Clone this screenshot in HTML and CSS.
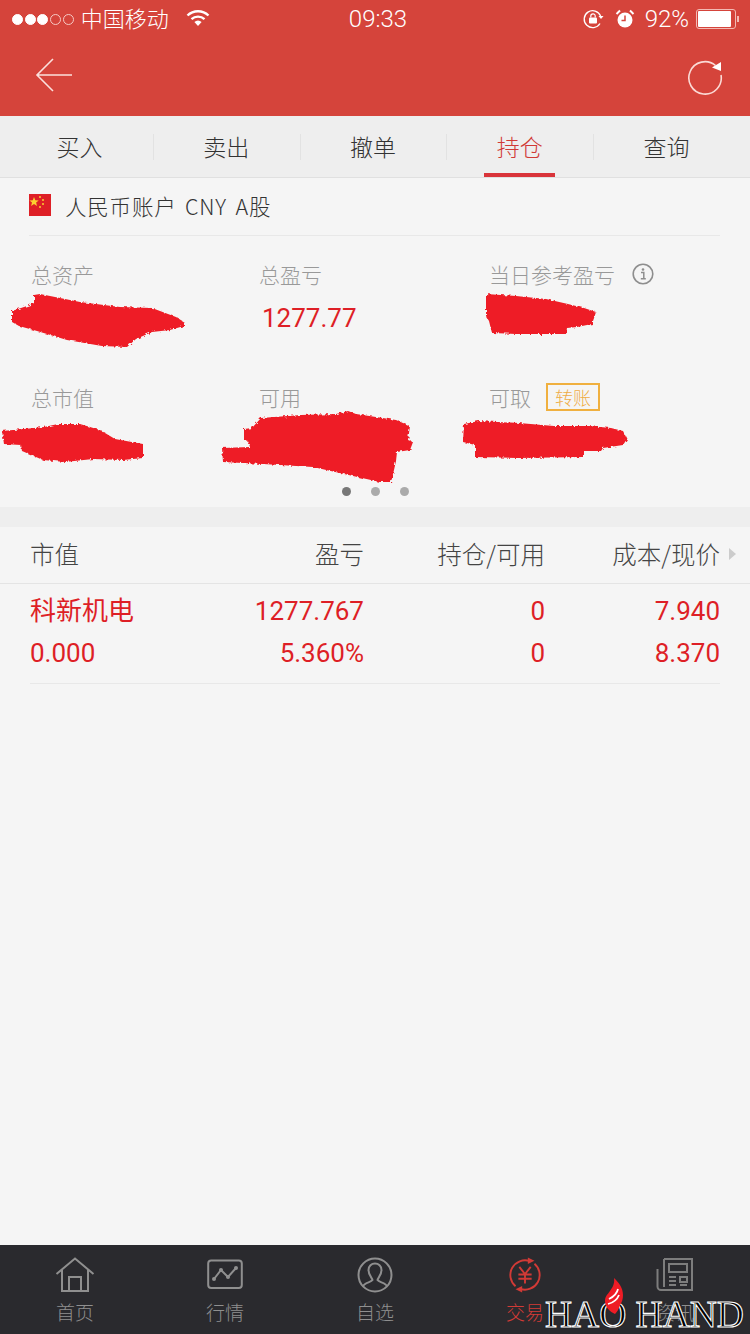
FILE: index.html
```html
<!DOCTYPE html>
<html>
<head>
	<meta charset="utf-8">
	<meta name="viewport" content="width=device-width, initial-scale=1">
	<title>持仓</title>
	<link rel="stylesheet" href="styles.css">
</head>
<body>
	<main class="phone">
		<header class="top">
			<div class="status">
				<div class="status-left">
					<span class="dots"><i class="on"></i><i class="on"></i><i class="on"></i><i></i><i></i></span>
					<span class="carrier">中国移动</span>
					<svg class="wifi" width="24" height="18" viewBox="0 0 24 18"><path d="M1.5 6.5a15 15 0 0 1 21 0" fill="none" stroke="#fff" stroke-width="2.4"/><path d="M5.5 10.2a9.5 9.5 0 0 1 13 0" fill="none" stroke="#fff" stroke-width="2.4"/><path d="M12 17l-3.6-4a5 5 0 0 1 7.2 0z" fill="#fff"/></svg>
				</div>
				<div class="clock">09:33</div>
				<div class="status-right">
					<svg class="lock" width="22" height="20" viewBox="0 0 22 20"><path d="M17 14.5A8.5 8.5 0 1 1 17.6 7" fill="none" stroke="#fff" stroke-width="1.3"/><path d="M15.5 7h5l-2.5 3z" fill="#fff"/><rect x="6" y="8.5" width="8" height="6" rx="1" fill="#fff"/><path d="M7.8 8.5V7a2.2 2.2 0 0 1 4.400 0v1.500" fill="none" stroke="#fff" stroke-width="1.200"/></svg>
					<svg class="alarm" width="20" height="20" viewBox="0 0 20 20"><circle cx="10" cy="11" r="7.500" fill="#fff"/><path d="M10 6.500V11.500H6.500" fill="none" stroke="#d5443b" stroke-width="1.500"/><path d="M1.500 5L5 1.500M18.500 5L15 1.500" stroke="#fff" stroke-width="2"/></svg>
					<span class="pct">92%</span>
					<span class="battery"><span class="level"></span></span><span class="nub"></span>
				</div>
			</div>
			<div class="navbar">
				<svg width="38" height="34" viewBox="0 0 38 34"><path d="M37 17H2M18 1L2 17l16 16" fill="none" stroke="#fbe0dc" stroke-width="1.600"/></svg>
				<svg class="reload" width="36" height="36" viewBox="0 0 36 36"><path d="M28.500 5.500A16.200 16.200 0 1 0 34 15" fill="none" stroke="#fbdad5" stroke-width="1.600"/><path d="M25 7.500L34 2v9z" fill="#fff"/></svg>
			</div>
		</header>

		<nav class="tabs">
			<div class="tab">买入</div>
			<div class="tab">卖出</div>
			<div class="tab">撤单</div>
			<div class="tab active">持仓</div>
			<div class="tab">查询</div>
		</nav>

		<section class="account">
			<div class="account-row">
				<svg class="flag" width="22" height="22" viewBox="0 0 22 22"><rect width="22" height="22" fill="#de1f26"/><path d="M5 3l1.300 3.200 3.400.2-2.600 2.200.9 3.300L5 10.100 2.100 11.900l.9-3.300L.4 6.400l3.400-.2z" fill="#fbd130"/><g fill="#fbd130"><circle cx="11" cy="3" r="1"/><circle cx="14" cy="6" r="1"/><circle cx="14" cy="10" r="1"/><circle cx="11" cy="13" r="1"/></g></svg>
				<span>人民币账户 CNY A股</span>
			</div>
			<div class="summary">
				<div class="cell">
					<div class="label">总资产</div>
				</div>
				<div class="cell">
					<div class="label">总盈亏</div>
					<div class="value">1277.77</div>
				</div>
				<div class="cell">
					<div class="label">当日参考盈亏
						<svg class="info" width="22" height="22" viewBox="0 0 22 22"><circle cx="11" cy="11" r="9.800" fill="none" stroke="#8e8e8e" stroke-width="1.600"/><circle cx="11" cy="6.500" r="1.300" fill="#8e8e8e"/><path d="M9 9.500h2.800V15.500M8.800 15.800h5" fill="none" stroke="#8e8e8e" stroke-width="1.500"/></svg>
					</div>
				</div>
				<div class="cell">
					<div class="label">总市值</div>
				</div>
				<div class="cell">
					<div class="label">可用</div>
				</div>
				<div class="cell">
					<div class="label">可取 <span class="transfer">转账</span></div>
				</div>
			</div>
			<div class="pager"><i class="current"></i><i></i><i></i></div>
			<svg class="scribbles" width="750" height="329" viewBox="0 178 750 329">
				<defs>
					<filter id="rough" x="-5%" y="-10%" width="110%" height="120%">
						<feTurbulence type="fractalNoise" baseFrequency="0.35" numOctaves="2" seed="4"/>
						<feDisplacementMap in="SourceGraphic" scale="4"/>
					</filter>
				</defs>
				<g fill="#ee1c25" filter="url(#rough)">
					<path d="M34 295L40 294 80 302 120 307 152 308 168 314 176 317 184 322 184 326 170 330 152 332 136 339 127 347 102 346 67 340 37 331 19 326 12 322 12 311 30 305 34 303z"/>
					<path d="M2 431l22-2 20-2 14-3 22 0 20 6 15 9 28 5v14l-20 2-30-1-28 3-22-2-21-9-1-6-17-1z"/>
					<path d="M261 418L301 415 336 414 348 411 356 414 396 420 410 426 408 440 413 442 410 450 397 452 396 461 394 470 391 482 379 482 371 480 353 476 313 467 263 464 223 462 222 448 250 447 248 441 244 440 244 429 252 428z"/>
					<path d="M486 294l30 2 30 3 22 5 16 4 12 4-4 12-15 3-10 1-1 6-50 0-24-1-3-12-3-5z"/>
					<path d="M464 424l15-3 40 2 35 3 35 0 22 2 12 3 4 8-4 6-20 3-2 3-18 0v6l-65 1-43-1v-12l-12-3z"/>
				</g>
			</svg>
		</section>

		<div class="band"></div>

		<section class="positions">
			<div class="pos-head">
				<div class="col-a">市值</div>
				<div class="col-b">盈亏</div>
				<div class="col-c">持仓/可用</div>
				<div class="col-d">成本/现价</div>
				<span class="more"></span>
			</div>
			<div class="pos-row">
				<div class="pos-line">
					<div class="col-a">科新机电</div>
					<div class="col-b">1277.767</div>
					<div class="col-c">0</div>
					<div class="col-d">7.940</div>
				</div>
				<div class="pos-line">
					<div class="col-a">0.000</div>
					<div class="col-b">5.360%</div>
					<div class="col-c">0</div>
					<div class="col-d">8.370</div>
				</div>
			</div>
		</section>

		<footer class="bottom">
			<div class="item">
				<svg width="40" height="36" viewBox="0 0 40 36"><path d="M1.500 17L20 1.500 38.500 17M7 13v21h26V13M14 34V20h12v14" fill="none" stroke="#8f8f8f" stroke-width="2"/></svg>
				<span>首页</span>
			</div>
			<div class="item">
				<svg width="36" height="36" viewBox="0 0 36 36"><rect x="1.200" y="3.500" width="33.600" height="27.500" rx="3" fill="none" stroke="#8f8f8f" stroke-width="2"/><path d="M7 22l7-9 7 7 8-9" fill="none" stroke="#8f8f8f" stroke-width="2"/><g fill="#8f8f8f"><circle cx="7" cy="22" r="2"/><circle cx="14" cy="13" r="2"/><circle cx="21" cy="20" r="2"/><circle cx="29" cy="11" r="2"/></g></svg>
				<span>行情</span>
			</div>
			<div class="item">
				<svg width="36" height="36" viewBox="0 0 36 36"><circle cx="18" cy="18" r="16.500" fill="none" stroke="#8f8f8f" stroke-width="2"/><path d="M6 29.500c1-4 8-4 9.500-6.500 0-2-4-4-4-10 0-4 3-6.500 6.500-6.500s6.500 2.500 6.500 6.500c0 6-4 8-4 10 1.500 2.500 8.500 2.500 9.500 6.500" fill="none" stroke="#8f8f8f" stroke-width="2"/></svg>
				<span>自选</span>
			</div>
			<div class="item current">
				<svg width="38" height="36" viewBox="0 0 38 38"><path d="M24 4.300A15.500 15.500 0 0 0 9 30.800M29 7.200A15.500 15.500 0 0 1 14 33.700" fill="none" stroke="#d13a36" stroke-width="2"/><path d="M22 .5l7 3.500-7 3.500zM16 37.500l-7-3.500 7-3.500z" fill="#d13a36"/><path d="M13 10.500l6 7.500 6-7.500M12 18.500h14M12 23h14M19 18v10" fill="none" stroke="#d13a36" stroke-width="2"/></svg>
				<span>交易</span>
			</div>
			<div class="item">
				<svg width="38" height="36" viewBox="0 0 38 36"><path d="M8 2h28v31H5a3.500 3.500 0 0 1-3.500-3.500V12M8 2v28" fill="none" stroke="#7d7d7d" stroke-width="2"/><path d="M13 7h18v8H13zM13 20h7M13 24h7M13 28h7M24 20h7v5h-7zM24 28h7" fill="none" stroke="#7d7d7d" stroke-width="2"/></svg>
				<span>资讯</span>
			</div>
		</footer>

		<div class="mark">
			<svg class="flame" width="20" height="36" viewBox="0 0 20 36"><path d="M10 0c4 4 9 9 9 17 0 4-1 7-3 10-1 4-3 7-5 9-5-2-10-7-10-13 0-5 3-7 5-10s5-7 4-13z" fill="#ee1c25"/><path d="M5 21c4-2 8-5 9-10M4 26c4-1 9-4 11-9" fill="none" stroke="#fff" stroke-width="1.800"/></svg>
			<span>HAO HAND</span>
		</div>
	</main>
</body>
</html>
```

FILE: styles.css
```css
html, body {margin: 0; padding: 0;}
body {background: #f5f5f5; font-family: "Noto Sans CJK SC", sans-serif; font-weight: 300;}
svg {display: block;}
i {display: block;}
.phone {position: relative; width: 750px; height: 1334px; overflow: hidden; display: flex; flex-direction: column; background: #f5f5f5;}

.top {height: 116px; background: #d5443b; color: #fff; flex: none;}
.status {height: 38px; display: flex; justify-content: space-between; align-items: center; padding: 0 11px 0 12px; position: relative;}
.status-left, .status-right {display: flex; align-items: center;}
.dots {display: flex; gap: 1.7px;}
.dots i {width: 9px; height: 9px; border: 1px solid #f6c9c4; border-radius: 50%; box-sizing: content-box;}
.dots i.on {background: #fff; border-color: #fff;}
.carrier {font-size: 22px; line-height: 34px; margin: 0 0 4px 7px; letter-spacing: 0;}
.wifi {margin-left: 17px; margin-top: -2px;}
.clock {position: absolute; left: 6px; right: 0; text-align: center; font-family: Roboto, sans-serif; font-weight: 300; font-size: 24px; line-height: 38px;}
.lock {margin-right: 10px;}
.alarm {margin-right: 10px;}
.pct {font-family: Roboto, sans-serif; font-weight: 300; font-size: 24px; margin-right: 7px;}
.battery {width: 36px; height: 16px; border: 1px solid #f3b9b3; border-radius: 3px; padding: 1px; display: block;}
.level {display: block; width: 33px; height: 16px; background: #fff; border-radius: 1px;}
.nub {width: 2px; height: 6px; background: #f3b9b3; margin-left: 1px;}
.navbar {height: 78px; display: flex; justify-content: space-between; align-items: flex-start; padding: 20px 27px 0 35px; box-sizing: border-box;}
.reload {margin-top: 2px;}

.tabs {height: 61px; flex: none; display: flex; background: #eeeeee; border-bottom: 1px solid #e0e0e0; padding: 0 10px 0 6px; align-items: center;}
.tab {position: relative; flex: 1; height: 61px; line-height: 60px; text-align: center; font-size: 23px; font-weight: 300; color: #333;}
.tab + .tab::before {content: ""; position: absolute; left: 0; top: 18px; height: 26px; width: 1px; background: #e2e2e2;}
.tab.active {color: #d13a36;}
.tab.active::after {content: ""; position: absolute; left: 38px; right: 38px; bottom: 0; height: 4px; background: #d9343a;}

.account {position: relative; height: 329px; flex: none;}
.account-row {height: 58px; margin: 0 30px 0 29px; padding-bottom: 3px; box-sizing: border-box; border-bottom: 1px solid #e8e8e8; display: flex; align-items: center; gap: 14px; font-size: 21.5px; color: #333; word-spacing: 3px; letter-spacing: 0.8px;}
.summary {display: grid; grid-template-columns: 228px 230px 1fr; grid-auto-rows: 123px; padding: 22px 0 0 31px;}
.label {display: flex; align-items: center; height: 32px; font-size: 21px; color: #999; gap: 6px;}
.info {margin-left: 11px;}
.value {font-family: Roboto, sans-serif; font-weight: 400; font-size: 26px; color: #de1f26; margin: 13px 0 0 3px;}
.transfer {display: inline-block; border: 2px solid #f0b03f; color: #efac45; font-size: 18px; line-height: 24px; padding: 0 7px; margin-left: 9px;}
.pager {position: absolute; left: 342px; top: 309px; display: flex; gap: 20px;}
.pager i {width: 9px; height: 9px; border-radius: 50%; background: #aaa;}
.pager i.current {background: #777;}
.scribbles {position: absolute; left: 0; top: 0;}

.band {height: 20px; flex: none; background: #eeeeee;}
.positions {flex: 1;}
.pos-head, .pos-line {display: flex; padding: 0 30px;}
.pos-head {position: relative; height: 57px; padding-bottom: 4px; box-sizing: border-box; align-items: center; border-bottom: 1px solid #e4e4e4; font-size: 24.5px; color: #444;}
.pos-row {height: 100px; border-bottom: 1px solid #e8e8e8; margin: 0 30px; padding-top: 6px; box-sizing: border-box;}
.pos-line {padding: 0; height: 42px; align-items: center; font-family: Roboto, "Noto Sans CJK SC", sans-serif; font-weight: 400; font-size: 26px; color: #de1f26;}
.pos-line:first-child .col-a {line-height: 36px; margin-top: -1px;}
.col-a {width: 190px;}
.col-b {width: 144px; text-align: right;}
.col-c {width: 181px; text-align: right;}
.col-d {width: 175px; text-align: right;}
.more {position: absolute; left: 729px; top: 21px; border-left: 7px solid #ccc; border-top: 6px solid transparent; border-bottom: 6px solid transparent;}

.bottom {height: 89px; flex: none; background: #2a2a2e; display: flex;}
.item {width: 150px; height: 89px; display: flex; flex-direction: column; align-items: center; font-size: 19px; line-height: 28px; color: #8f8f8f; padding-top: 12px; box-sizing: border-box; gap: 5px;}
.item.current {color: #d13a36;}
.mark {position: absolute; left: 545px; top: 1278px; width: 205px; height: 56px;}
.mark span {position: absolute; left: 0; top: 18px; white-space: nowrap; font-family: "Liberation Serif", serif; font-size: 37.5px; line-height: 38px; color: #000; -webkit-text-stroke: 1.1px #fff; text-shadow: 0 0 2px #000;}
.flame {position: absolute; left: 59px; top: 0; z-index: 1;}
```
